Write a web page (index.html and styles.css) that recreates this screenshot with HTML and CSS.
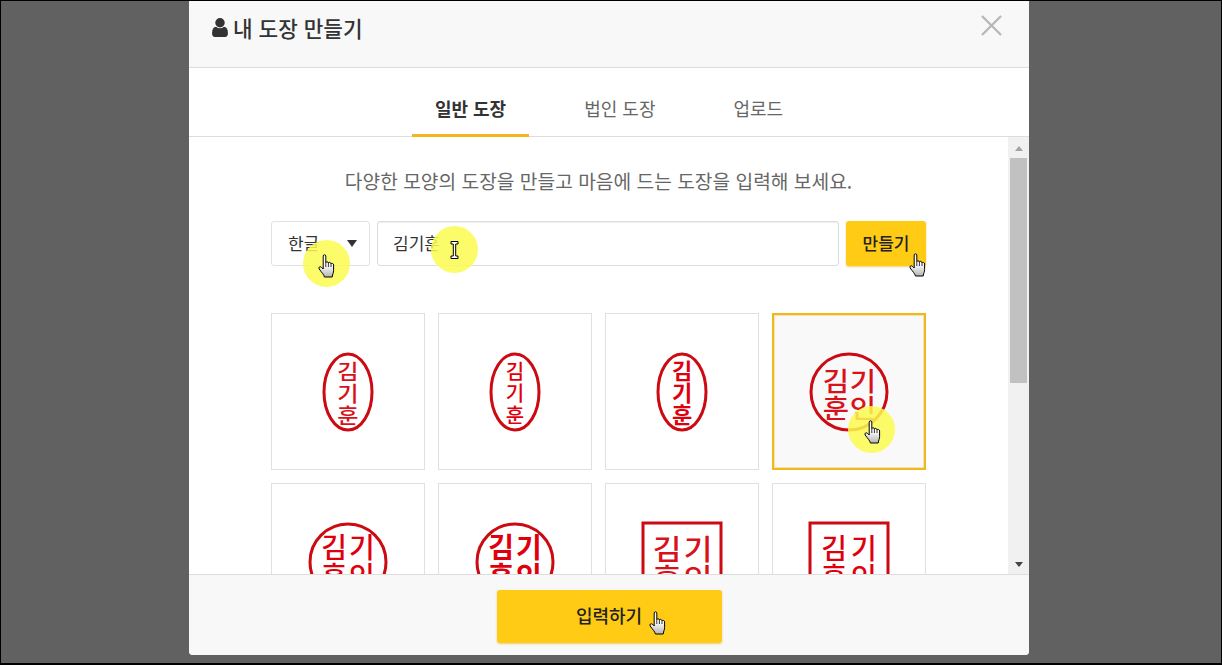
FILE: index.html
```html
<!DOCTYPE html>
<html lang="ko">
<head>
    <meta charset="UTF-8">
    <title>내 도장 만들기</title>
    <link rel="stylesheet" href="styles.css">
</head>
<body>
    <svg class="defs" width="0" height="0">
        <defs>
            <linearGradient id="hand-fill" x1="0" y1="0" x2="0" y2="1">
                <stop offset="0.45" stop-color="#ffffff"/>
                <stop offset="1" stop-color="#b4b4b4"/>
            </linearGradient>
            <symbol id="hand" viewBox="0 0 17 24">
                <path d="M5.2 2C5.2.4 7.8.4 7.8 2V8.6C8 7.4 10.2 7.4 10.4 9C10.6 8 12.8 8 13 9.8C13.3 9 15.6 9.2 15.6 11V16.5C15.6 18.8 14.6 20 14.2 23H6.4C6 20.6 3.8 18.8 1.2 15C.2 13.4 1.9 12 3.4 13.2L5.2 15Z" fill="url(#hand-fill)" stroke="#000" stroke-width="1"/>
                <path d="M7.8 8.6V13M10.4 9V13M13 9.8V13" fill="none" stroke="#000" stroke-width="0.8"/>
            </symbol>
        </defs>
    </svg>

    <div class="screen">
        <div class="modal">
            <div class="modal-head">
                <h1 class="modal-title">
                    <svg class="user-icon" viewBox="256 128 1280 1536"><path d="M1536 1399q0 109-62.5 187t-150.5 78h-854q-88 0-150.5-78t-62.5-187q0-85 8.5-160.5t31.5-152 58.5-131 94-89 134.5-34.5q131 128 313 128t313-128q76 0 134.5 34.5t94 89 58.5 131 31.5 152 8.5 160.5zm-256-887q0 159-112.5 271.5t-271.5 112.5-271.5-112.5-112.5-271.5 112.5-271.5 271.5-112.5 271.5 112.5 112.5 271.5z"/></svg>
                    내 도장 만들기
                </h1>
                <svg class="close-icon" viewBox="0 0 22 22"><path d="M1 1L21 21M21 1L1 21"/></svg>
            </div>

            <div class="tabs">
                <div class="tab active">일반 도장</div>
                <div class="tab">법인 도장</div>
                <div class="tab">업로드</div>
            </div>

            <div class="modal-body">
                <div class="scroll-area">
                    <div class="content">
                        <p class="intro">다양한 모양의 도장을 만들고 마음에 드는 도장을 입력해 보세요.</p>
                        <div class="stamp-form">
                            <div class="lang-select">한글<span class="caret"></span></div>
                            <input class="name-input" value="김기훈">
                            <button class="make-btn">만들기</button>
                        </div>
                        <div class="stamp-grid">
                            <div class="stamp-card">
                                <svg class="stamp" viewBox="-60 -60 120 120">
                                    <ellipse class="ring" cx="0" cy="0" rx="24" ry="38"/>
                                    <text class="seal-text" transform="translate(0 -13) scale(1.1 1)">김</text>
                                    <text class="seal-text" transform="translate(0 9) scale(1.1 1)">기</text>
                                    <text class="seal-text" transform="translate(0 31) scale(1.1 1)">훈</text>
                                </svg>
                            </div>
                            <div class="stamp-card">
                                <svg class="stamp" viewBox="-60 -60 120 120">
                                    <ellipse class="ring" cx="0" cy="0" rx="24" ry="38"/>
                                    <text class="plain-text" y="-13">김</text>
                                    <text class="plain-text" y="9">기</text>
                                    <text class="plain-text" y="31">훈</text>
                                </svg>
                            </div>
                            <div class="stamp-card">
                                <svg class="stamp" viewBox="-60 -60 120 120">
                                    <ellipse class="ring" cx="0" cy="0" rx="24" ry="38"/>
                                    <text class="bold-text" y="-13">김</text>
                                    <text class="bold-text" y="9">기</text>
                                    <text class="bold-text" y="31">훈</text>
                                </svg>
                            </div>
                            <div class="stamp-card selected">
                                <svg class="stamp" viewBox="-60 -60 120 120">
                                    <circle class="ring" cx="0" cy="0" r="38"/>
                                    <text class="seal-big" transform="translate(-13 -1) scale(1.1 1)">김</text>
                                    <text class="seal-big" transform="translate(14 -1) scale(1.1 1)">기</text>
                                    <text class="seal-big" transform="translate(-13 26) scale(1.1 1)">훈</text>
                                    <text class="seal-big" transform="translate(14 26) scale(1.1 1)">인</text>
                                </svg>
                            </div>
                            <div class="stamp-card">
                                <svg class="stamp" viewBox="-60 -60 120 120">
                                    <circle class="ring" cx="0" cy="0" r="38"/>
                                    <text class="plain-big" x="-14" y="-4">김</text>
                                    <text class="plain-big" x="14" y="-4">기</text>
                                    <text class="plain-big" x="-14" y="25">훈</text>
                                    <text class="plain-big" x="14" y="25">인</text>
                                </svg>
                            </div>
                            <div class="stamp-card">
                                <svg class="stamp" viewBox="-60 -60 120 120">
                                    <circle class="ring" cx="0" cy="0" r="38"/>
                                    <text class="bold-big" x="-14" y="-4">김</text>
                                    <text class="bold-big" x="14" y="-4">기</text>
                                    <text class="bold-big" x="-14" y="25">훈</text>
                                    <text class="bold-big" x="14" y="25">인</text>
                                </svg>
                            </div>
                            <div class="stamp-card">
                                <svg class="stamp" viewBox="-60 -60 120 120">
                                    <rect class="ring" x="-39" y="-39" width="78" height="78"/>
                                    <text class="seal-big" transform="translate(-15 -2) scale(1.2 1.1)">김</text>
                                    <text class="seal-big" transform="translate(16 -2) scale(1.2 1.1)">기</text>
                                    <text class="seal-big" transform="translate(-15 27) scale(1.2 1.1)">훈</text>
                                    <text class="seal-big" transform="translate(16 27) scale(1.2 1.1)">인</text>
                                </svg>
                            </div>
                            <div class="stamp-card">
                                <svg class="stamp" viewBox="-60 -60 120 120">
                                    <rect class="ring" x="-39" y="-39" width="78" height="78"/>
                                    <text class="plain-big" x="-15" y="-3">김</text>
                                    <text class="plain-big" x="15" y="-3">기</text>
                                    <text class="plain-big" x="-15" y="26">훈</text>
                                    <text class="plain-big" x="15" y="26">인</text>
                                </svg>
                            </div>
                        </div>
                    </div>
                </div>
                <div class="scrollbar">
                    <span class="arrow-up"></span>
                    <div class="thumb"></div>
                    <span class="arrow-down"></span>
                </div>
            </div>

            <div class="modal-foot">
                <button class="submit-btn">입력하기</button>
            </div>
        </div>

        <!-- recorded mouse marks -->
        <span class="spot spot-select"></span>
        <span class="spot spot-input"></span>
        <span class="spot spot-card"></span>
        <svg class="pointer pointer-select"><use href="#hand"/></svg>
        <svg class="pointer pointer-make"><use href="#hand"/></svg>
        <svg class="pointer pointer-card"><use href="#hand"/></svg>
        <svg class="pointer pointer-submit"><use href="#hand"/></svg>
        <svg class="ibeam" viewBox="0 0 9 18"><path d="M1 .5H8V3H5.7V15H8V17.5H1V15H3.3V3H1Z"/></svg>
    </div>
</body>
</html>
```

FILE: styles.css
```css
* {
    box-sizing: border-box;
}

html, body {
    margin: 0;
    height: 100%;
    overflow: hidden;
}

body {
    font-family: "Noto Sans CJK KR", "Noto Sans", sans-serif;
    color: #333;
}

.defs {
    position: absolute;
}

.screen {
    position: relative;
    width: 1222px;
    height: 665px;
    border: 1px solid #000;
    border-bottom-width: 2px;
    background-color: #616161;
    display: flex;
    overflow: hidden;
}

.modal {
    width: 840px;
    height: 654px;
    margin-left: 188px;
    background-color: #fff;
    border-radius: 0 0 4px 4px;
    display: flex;
    flex-direction: column;
    overflow: hidden;
}

.modal-head {
    height: 67px;
    flex: none;
    padding: 14px 27px 0 23px;
    background-color: #f8f8f8;
    border-bottom: 1px solid #ddd;
    display: flex;
    justify-content: space-between;
    align-items: flex-start;
}

.modal-title {
    margin: -1px 0 0;
    font-size: 21.3px;
    font-weight: 500;
    line-height: 27px;
    color: #333;
    display: flex;
    align-items: center;
    gap: 5px;
}

.user-icon {
    width: 16px;
    height: 19px;
    fill: #333;
}

.close-icon {
    width: 21px;
    height: 21px;
    fill: none;
    stroke: #b7b7b7;
    stroke-width: 2.4;
}

.tabs {
    height: 69px;
    flex: none;
    border-bottom: 1px solid #ddd;
    display: flex;
    justify-content: center;
    gap: 32px;
}

.tab {
    height: 69px;
    padding: 0 23px;
    font-size: 18px;
    line-height: 80px;
    color: #666;
}

.tab.active {
    font-weight: 700;
    color: #333;
    border-bottom: 3px solid #f2b71e;
}

.modal-body {
    flex: 1;
    min-height: 0;
    display: flex;
}

.scroll-area {
    flex: 1;
    overflow: hidden;
}

.content {
    width: 655px;
    margin: 0 auto;
}

.intro {
    margin: 29px 0 0;
    font-size: 19.2px;
    line-height: 30px;
    color: #666;
    text-align: center;
}

.stamp-form {
    margin-top: 25px;
    display: flex;
    gap: 7px;
    height: 45px;
}

.lang-select {
    width: 99px;
    padding-left: 16px;
    font-size: 17px;
    line-height: 42px;
    border: 1px solid #e2e2e2;
    border-radius: 3px;
    position: relative;
}

.caret {
    position: absolute;
    right: 12px;
    top: 18px;
    border-left: 5px solid transparent;
    border-right: 5px solid transparent;
    border-top: 7px solid #333;
}

.name-input {
    flex: 1;
    padding: 0 15px 2px;
    font-family: inherit;
    font-size: 17px;
    color: #333;
    border: 1px solid #ddd;
    border-radius: 3px;
    box-shadow: inset 0 1px 1px #eee;
}

.make-btn {
    width: 80px;
    padding: 0 0 3px;
    font-family: inherit;
    font-size: 17px;
    font-weight: 500;
    color: #222;
    background-color: #ffcb14;
    border: none;
    border-radius: 3px;
    box-shadow: 0 1px 2px rgba(220, 170, 0, 0.5);
}

.stamp-grid {
    margin-top: 47px;
    display: grid;
    grid-template-columns: repeat(4, 154px);
    grid-auto-rows: 157px;
    gap: 13px;
}

.stamp-card {
    border: 1px solid #e0e0e0;
    display: flex;
    align-items: center;
    justify-content: center;
}

.stamp-card.selected {
    background-color: #f9f9f9;
    border: 2px solid #f2b71e;
    box-shadow: inset 0 0 0 1px rgba(242, 183, 30, 0.35);
}

.stamp {
    width: 120px;
    height: 120px;
    flex: none;
}

.ring {
    fill: none;
    stroke: #cb0a12;
    stroke-width: 3;
}

.stamp text {
    fill: #e0000d;
    text-anchor: middle;
    font-family: "Noto Sans CJK KR", sans-serif;
}

.stamp .seal-text {
    font-size: 21px;
    font-weight: 500;
    fill: #d8121a;
}

.stamp .plain-text {
    font-size: 20px;
    font-weight: 500;
}

.stamp .bold-text {
    font-size: 22px;
    font-weight: 700;
}

.stamp .seal-big {
    font-size: 26px;
    font-weight: 500;
    fill: #d8121a;
}

.stamp .plain-big {
    font-size: 28px;
    font-weight: 500;
}

.stamp .bold-big {
    font-size: 28px;
    font-weight: 700;
}

.scrollbar {
    width: 21px;
    flex: none;
    background-color: #f1f1f1;
    display: flex;
    flex-direction: column;
    align-items: center;
    padding: 9px 0 7px;
}

.thumb {
    width: 17px;
    height: 225px;
    margin-top: 7px;
    background-color: #c1c1c1;
}

.arrow-up {
    border-left: 4px solid transparent;
    border-right: 4px solid transparent;
    border-bottom: 5px solid #a3a3a3;
}

.arrow-down {
    margin-top: auto;
    border-left: 4px solid transparent;
    border-right: 4px solid transparent;
    border-top: 5px solid #444;
}

.modal-foot {
    height: 81px;
    flex: none;
    background-color: #f8f8f8;
    border-top: 1px solid #ddd;
    display: flex;
    justify-content: center;
    padding-top: 15px;
}

.submit-btn {
    width: 225px;
    height: 53px;
    padding: 0 0 3px;
    font-family: inherit;
    font-size: 18px;
    font-weight: 500;
    color: #222;
    background-color: #ffcb14;
    border: none;
    border-radius: 3px;
    box-shadow: 0 1px 2px rgba(220, 170, 0, 0.5);
}

/* mouse marks from the screen recording */
.spot {
    position: absolute;
    width: 47px;
    height: 47px;
    border-radius: 50%;
    background-color: rgba(251, 251, 80, 0.85);
}

.spot-select { left: 302px; top: 239px; }
.spot-input { left: 430px; top: 225px; }
.spot-card { left: 847px; top: 405px; }

.pointer {
    position: absolute;
    width: 17px;
    height: 24px;
}

.pointer-select { left: 317px; top: 253px; }
.pointer-make { left: 908px; top: 252px; }
.pointer-card { left: 863px; top: 419px; }
.pointer-submit { left: 648px; top: 610px; }

.ibeam {
    position: absolute;
    left: 449px;
    top: 240px;
    width: 9px;
    height: 18px;
    fill: #fff;
    stroke: #000;
    stroke-width: 1;
}
```
